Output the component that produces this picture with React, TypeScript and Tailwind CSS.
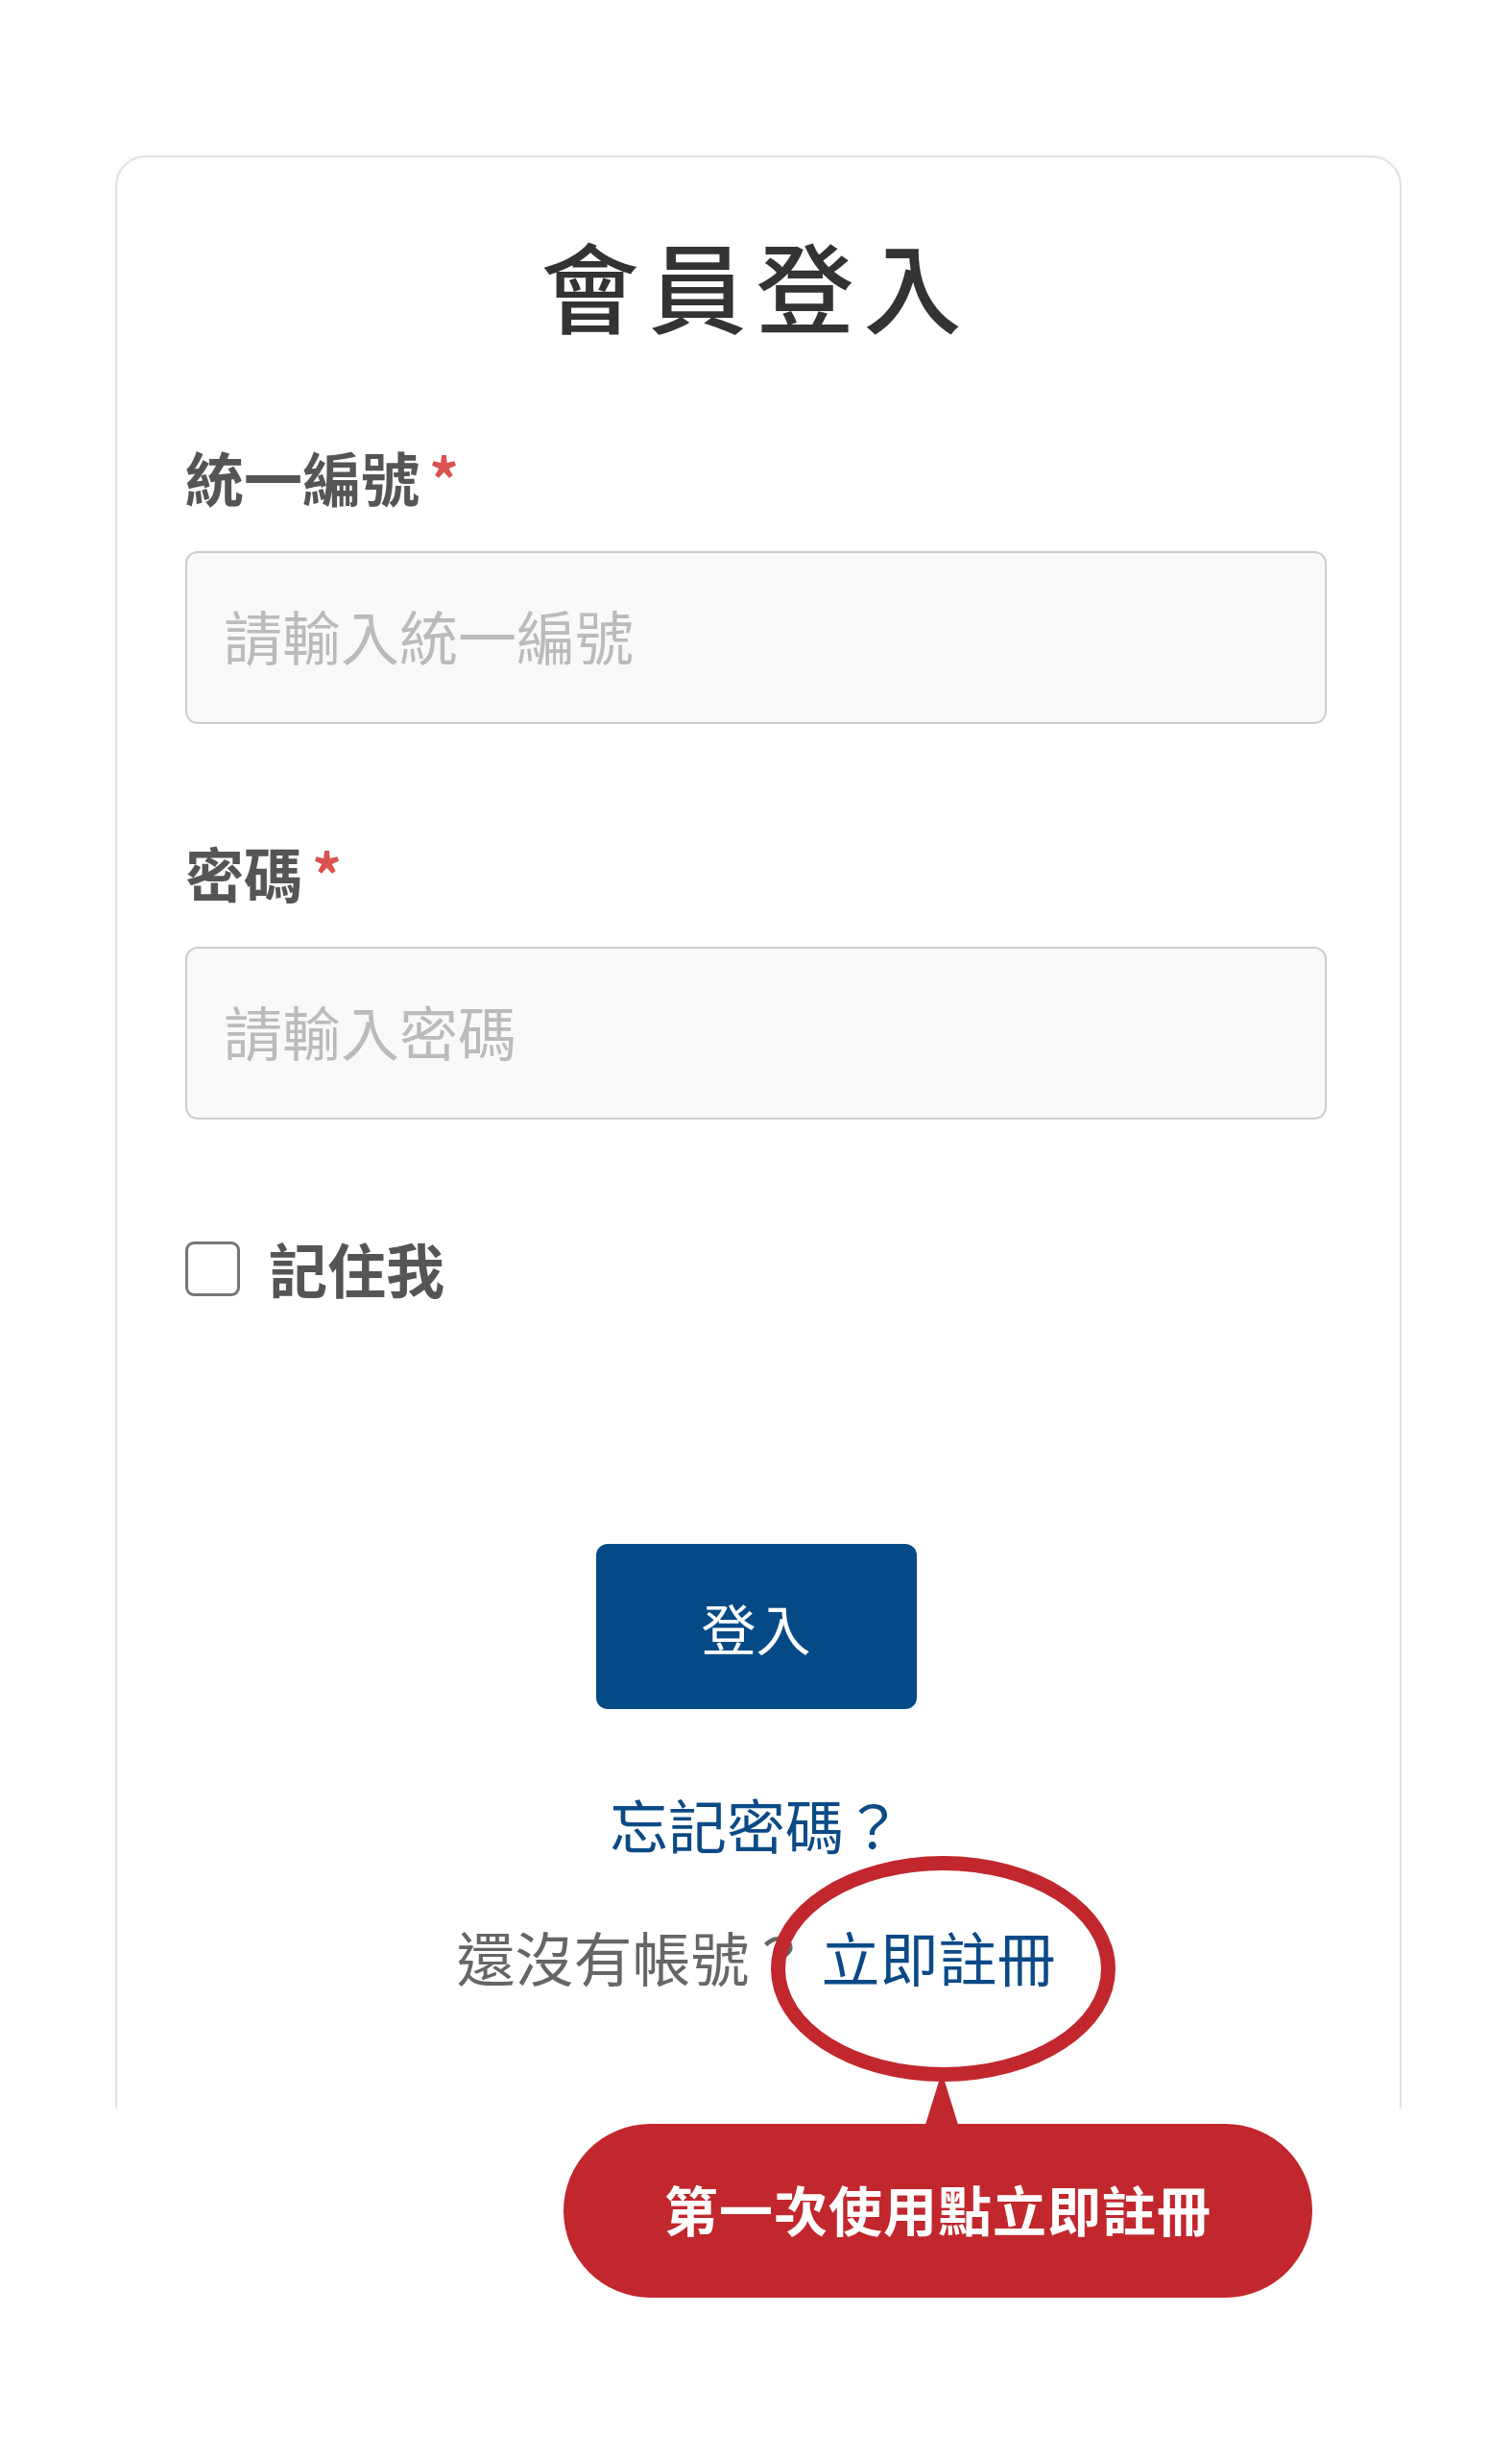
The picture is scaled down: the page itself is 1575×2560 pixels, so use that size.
import React from "react";

export default function App() {
  return (
    <div className="relative w-[1575px] min-h-[2560px] bg-white pt-[162px] font-['Noto_Sans_CJK_TC','Noto_Sans',sans-serif]">
      {/* card, clipped at the bottom like the screenshot */}
      <div className="ml-[120px] w-[1340px] h-[2034px] overflow-hidden">
        <div className="rounded-[32px] border-2 border-[#e2e2e2] bg-white pl-[71px] pr-[76px] pt-[72px] pb-[137px] shadow-[0_0_6px_rgba(0,0,0,0.05)]">
          <h1 className="text-center text-[102px] leading-[120px] tracking-[10px] font-medium text-[#333333]">
            會員登入
          </h1>

          <label className="mt-[96px] block text-[61px] leading-[90px] font-bold text-[#555555]">
            統一編號<span className="ml-[10px] text-[#d9534f]">*</span>
          </label>
          <div className="mt-[32px] flex h-[180px] items-center rounded-[13px] border-2 border-[#cccccc] bg-[#f9f9f9] pb-[4px] pl-[38px]">
            <span className="text-[61px] leading-[90px] text-[#bbbbbb]">請輸入統一編號</span>
          </div>

          <label className="mt-[110px] block text-[61px] leading-[90px] font-bold text-[#555555]">
            密碼<span className="ml-[10px] text-[#d9534f]">*</span>
          </label>
          <div className="mt-[32px] flex h-[180px] items-center rounded-[13px] border-2 border-[#cccccc] bg-[#f9f9f9] pb-[4px] pl-[38px]">
            <span className="text-[61px] leading-[90px] text-[#bbbbbb]">請輸入密碼</span>
          </div>

          <div className="mt-[110px] flex h-[90px] items-center gap-[30px]">
            <div className="h-[57px] w-[57px] rounded-[9px] border-[3px] border-[#767676] bg-white" />
            <span className="text-[61px] leading-[90px] font-bold text-[#555555]">記住我</span>
          </div>

          <div className="mx-auto mt-[242px] flex h-[172px] w-[334px] items-center justify-center rounded-[12px] bg-[#044a86]">
            <span className="text-[57px] leading-[80px] text-white">登入</span>
          </div>

          <div className="mt-[77px] text-center text-[61px] leading-[86px] text-[#0b4a87]">忘記密碼？</div>

          <div className="mt-[50px] text-center text-[61px] leading-[90px] text-[#666666]">
            還沒有帳號？<span className="ml-[14px] text-[#0b4a87]">立即註冊</span>
          </div>
        </div>
      </div>

      {/* callout bubble */}
      <div className="ml-[587px] mt-[16px] flex h-[181px] w-[780px] items-center justify-center rounded-[92px] bg-[#c1272d] pb-[6px]">
        <span className="text-[56px] leading-[80px] font-bold tracking-[1px] text-white">第一次使用點立即註冊</span>
      </div>

      {/* annotation ring around 立即註冊 */}
      <div className="absolute left-[803px] top-[1933px] h-[235px] w-[359px] rounded-[50%] border-[15px] border-[#c1272d]" />
      {/* pointer */}
      <svg className="absolute left-[962px] top-[2158px]" width="40" height="58" viewBox="0 0 40 58">
        <polygon points="19,0 37,58 1,58" fill="#c1272d" />
      </svg>
    </div>
  );
}
